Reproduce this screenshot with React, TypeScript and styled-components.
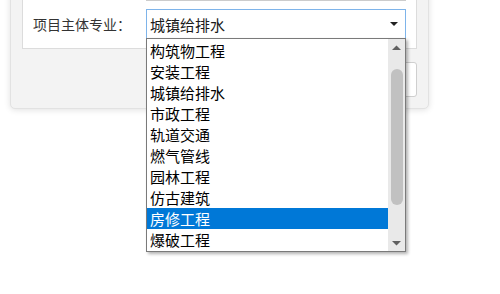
import React from "react";
import styled, { createGlobalStyle } from "styled-components";

const GlobalStyle = createGlobalStyle`
  html, body {
    margin: 0;
    padding: 0;
    background: #ffffff;
    font-family: "Noto Sans CJK SC", "Microsoft YaHei", sans-serif;
  }
`;

const Page = styled.div`
  padding-left: 10px;
  width: 500px;
  height: 294px;
  overflow: hidden;
  box-sizing: border-box;
`;

const OuterPanel = styled.div`
  margin-top: -52px;
  width: 419px;
  box-sizing: border-box;
  padding: 11px 11px 11px 11px;
  background: #f3f3f3;
  border: 1px solid #e2e2e2;
  border-radius: 0 0 5px 5px;
  box-shadow: 0 1px 6px rgba(0, 0, 0, 0.12);
`;

const InnerPanel = styled.div`
  background: #ffffff;
  border: 1px solid #dcdcdc;
  padding: 10px 10px 9px 10px;
  display: flex;
  flex-direction: column;
  gap: 8px;
`;

const FormRow = styled.div`
  display: flex;
  align-items: center;
  height: 30px;
`;

const Label = styled.div`
  width: 113px;
  flex-shrink: 0;
  font-size: 14px;
  color: #333333;
`;

const Input = styled.div`
  width: 260px;
  height: 30px;
  box-sizing: border-box;
  border: 1px solid #cccccc;
  background: #ffffff;
`;

const SelectWrap = styled.div`
  position: relative;
  width: 260px;
  height: 30px;
`;

const SelectBox = styled.div`
  height: 30px;
  box-sizing: border-box;
  border: 1px solid #7eb4ea;
  background: #ffffff;
  display: flex;
  align-items: center;
  justify-content: space-between;
  padding: 0 7px 0 3px;
  font-size: 15px;
  color: #1a1a1a;
`;

const Caret = styled.span`
  width: 0;
  height: 0;
  border-left: 4px solid transparent;
  border-right: 4px solid transparent;
  border-top: 4px solid #222222;
`;

const DropList = styled.div`
  position: absolute;
  top: calc(100% - 1px);
  left: 0;
  width: 260px;
  box-sizing: border-box;
  border: 1px solid #7a7a7a;
  background: #ffffff;
  box-shadow: 2px 2px 3px rgba(0, 0, 0, 0.3);
  display: flex;
  padding: 1px 0;
  z-index: 10;
`;

const Options = styled.div`
  flex: 1;
  display: flex;
  flex-direction: column;
`;

const Option = styled.div<{ selected?: boolean }>`
  height: 21px;
  line-height: 21px;
  padding-left: 3px;
  font-size: 15px;
  color: ${(p) => (p.selected ? "#ffffff" : "#000000")};
  background: ${(p) => (p.selected ? "#0078d7" : "transparent")};
`;

const ScrollBar = styled.div`
  width: 17px;
  margin: -1px 0;
  background: #e9e9e9;
  display: flex;
  flex-direction: column;
  align-items: center;
`;

const ScrollArrow = styled.div`
  height: 17px;
  width: 17px;
  display: flex;
  align-items: center;
  justify-content: center;
`;

const Track = styled.div`
  flex: 1;
  width: 100%;
  display: flex;
  justify-content: center;
`;

const Thumb = styled.div`
  width: 12px;
  border-radius: 6px;
  background: #c1c1c1;
`;

const ButtonRow = styled.div`
  display: flex;
  justify-content: flex-end;
  gap: 8px;
  margin-top: 13px;
`;

const Button = styled.button`
  width: 64px;
  height: 35px;
  border: 1px solid #cfcfcf;
  border-radius: 3px;
  background: #ffffff;
  font-family: inherit;
  font-size: 14px;
  color: #333333;
`;

const options = [
  "构筑物工程",
  "安装工程",
  "城镇给排水",
  "市政工程",
  "轨道交通",
  "燃气管线",
  "园林工程",
  "仿古建筑",
  "房修工程",
  "爆破工程",
];

const Arrow = ({ up }: { up?: boolean }) => (
  <svg width="9" height="6" viewBox="0 0 9 6">
    <path d={up ? "M0 5 L4.5 0.5 L9 5 Z" : "M0 1 L4.5 5.5 L9 1 Z"} fill="#606060" />
  </svg>
);

export default function App() {
  return (
    <Page>
      <GlobalStyle />
      <OuterPanel>
        <InnerPanel>
          <FormRow>
            <Label />
            <Input />
          </FormRow>
          <FormRow>
            <Label>项目主体专业：</Label>
            <SelectWrap>
              <SelectBox>
                <span>城镇给排水</span>
                <Caret />
              </SelectBox>
              <DropList>
                <Options>
                  {options.map((o) => (
                    <Option key={o} selected={o === "房修工程"}>
                      {o}
                    </Option>
                  ))}
                </Options>
                <ScrollBar>
                  <ScrollArrow>
                    <Arrow up />
                  </ScrollArrow>
                  <Track>
                    <Thumb style={{ marginTop: 13, height: 136 }} />
                  </Track>
                  <ScrollArrow>
                    <Arrow />
                  </ScrollArrow>
                </ScrollBar>
              </DropList>
            </SelectWrap>
          </FormRow>
        </InnerPanel>
        <ButtonRow>
          <Button>确定</Button>
          <Button>取消</Button>
        </ButtonRow>
      </OuterPanel>
    </Page>
  );
}
